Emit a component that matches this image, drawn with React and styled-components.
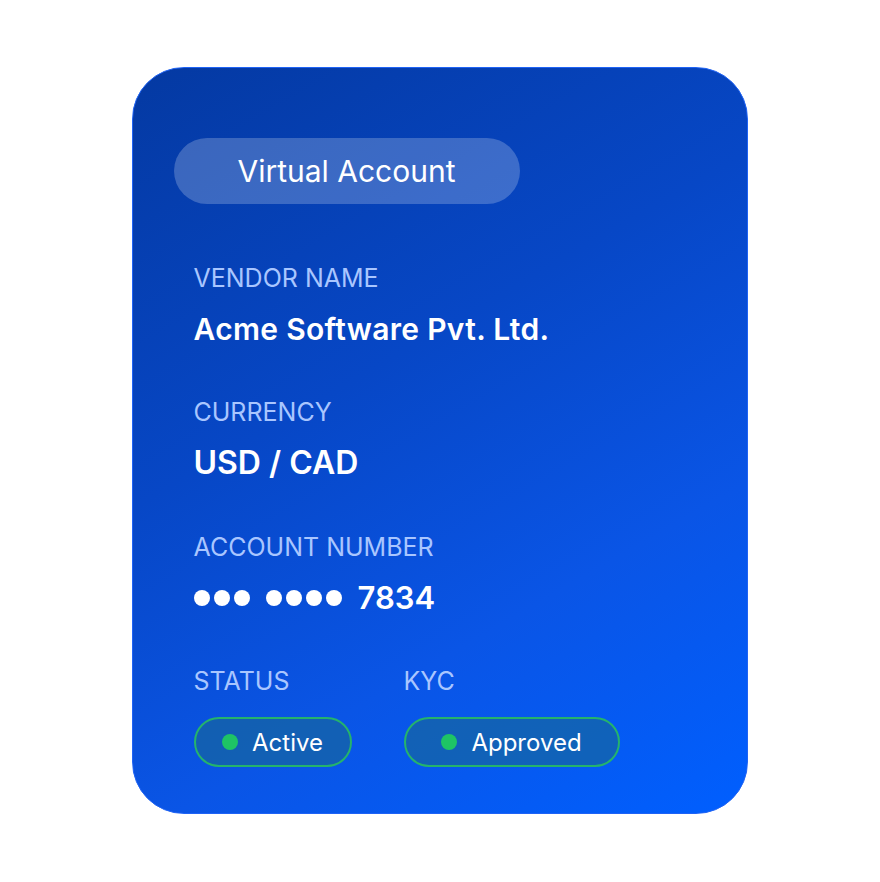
import React from "react";
import styled, { createGlobalStyle } from "styled-components";

const Global = createGlobalStyle`
  html, body { margin: 0; padding: 0; background: #ffffff; }
  body { font-family: Inter, "Noto Sans", sans-serif; }
`;

const Page = styled.div`
  width: 880px;
  height: 882px;
  display: flex;
  justify-content: center;
  padding-top: 67px;
  box-sizing: border-box;
`;

const Card = styled.div`
  width: 616px;
  height: 747px;
  box-sizing: border-box;
  border-radius: 52px;
  border: 1.5px solid #1f63f5;
  background: linear-gradient(150deg, #0439a2 0%, #0747c6 40%, #0a55e6 70%, #005fff 100%);
  padding: 69.5px 40.5px 0 40.5px;
  display: flex;
  flex-direction: column;
  color: #fff;
`;

const TitlePill = styled.div`
  width: 346px;
  height: 66px;
  border-radius: 33px;
  background: rgba(255, 255, 255, 0.22);
  display: flex;
  align-items: center;
  justify-content: center;
  font-size: 30px;
  font-weight: 400;
`;

const Fields = styled.div`
  display: flex;
  flex-direction: column;
  gap: 52.5px;
  padding-left: 20px;
  margin-top: 60px;
`;

const Field = styled.div`
  display: flex;
  flex-direction: column;
  gap: 20px;
`;

const Label = styled.div`
  font-size: 25px;
  line-height: 28px;
  color: #a9c6ff;
  font-weight: 400;
`;

const Value = styled.div`
  font-size: ${(p) => p.$size || 28}px;
  letter-spacing: ${(p) => p.$ls || 0}px;
  line-height: 34px;
  font-weight: 600;
  color: #fff;
  display: flex;
  align-items: center;
`;

const DotGroup = styled.span`
  display: inline-flex;
  gap: 4px;
  margin-right: 16px;
`;

const Dot = styled.span`
  width: 16px;
  height: 16px;
  border-radius: 50%;
  background: #fff;
`;

const Row = styled.div`
  display: flex;
`;

const Column = styled.div`
  width: ${(p) => p.$w}px;
  display: flex;
  flex-direction: column;
  gap: 22px;
`;

const Badge = styled.div`
  width: ${(p) => p.$w}px;
  height: 50px;
  box-sizing: border-box;
  border-radius: 25px;
  border: 2px solid #25b36c;
  background: rgba(24, 104, 150, 0.62);
  display: flex;
  align-items: center;
  justify-content: center;
  gap: 14px;
  font-size: 24px;
  color: #fff;
`;

const GreenDot = styled.span`
  width: 16px;
  height: 16px;
  border-radius: 50%;
  background: #1ec465;
`;

export default function App() {
  return (
    <>
      <Global />
      <Page>
        <Card>
          <TitlePill>Virtual Account</TitlePill>
          <Fields>
            <Field>
              <Label>VENDOR NAME</Label>
              <Value $size={30} $ls={0.3}>Acme Software Pvt. Ltd.</Value>
            </Field>
            <Field>
              <Label>CURRENCY</Label>
              <Value $size={32}>USD / CAD</Value>
            </Field>
            <Field>
              <Label>ACCOUNT NUMBER</Label>
              <Value $size={31}>
                <DotGroup>
                  <Dot />
                  <Dot />
                  <Dot />
                </DotGroup>
                <DotGroup>
                  <Dot />
                  <Dot />
                  <Dot />
                  <Dot />
                </DotGroup>
                7834
              </Value>
            </Field>
            <Row>
              <Column $w={210}>
                <Label>STATUS</Label>
                <Badge $w={158}>
                  <GreenDot />
                  Active
                </Badge>
              </Column>
              <Column $w={260}>
                <Label>KYC</Label>
                <Badge $w={216}>
                  <GreenDot />
                  Approved
                </Badge>
              </Column>
            </Row>
          </Fields>
        </Card>
      </Page>
    </>
  );
}
